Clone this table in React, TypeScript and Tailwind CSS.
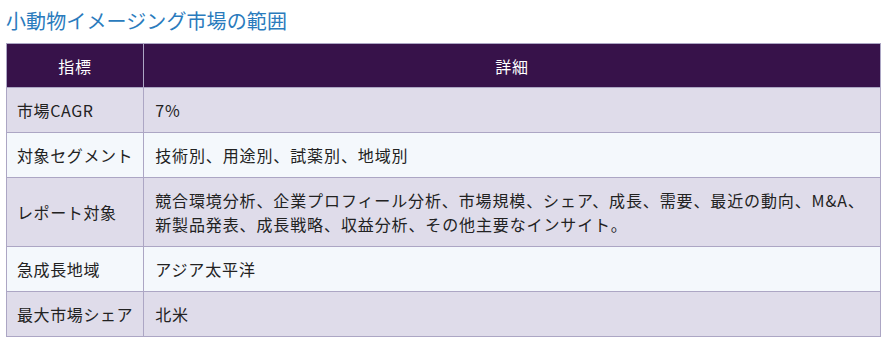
const ROWS: { label: string; detail: string }[] = [
  { label: '市場CAGR', detail: '7%' },
  { label: '対象セグメント', detail: '技術別、用途別、試薬別、地域別' },
  {
    label: 'レポート対象',
    detail:
      '競合環境分析、企業プロフィール分析、市場規模、シェア、成長、需要、最近の動向、M&A、新製品発表、成長戦略、収益分析、その他主要なインサイト。',
  },
  { label: '急成長地域', detail: 'アジア太平洋' },
  { label: '最大市場シェア', detail: '北米' },
];

export default function App() {
  return (
    <div
      className="h-[339px] w-[889px] bg-white pl-[6px] pt-[6px]"
      style={{ fontFamily: '"Noto Sans CJK JP", "Noto Sans", sans-serif' }}
    >
      <h2 className="mb-[8px] h-[29px] text-[20px] leading-[29px] font-normal tracking-[0.1px] text-[#2a7bbd]">
        小動物イメージング市場の範囲
      </h2>
      <table className="w-[875px] border-collapse text-[16px] leading-[24px] tracking-[0.88px] text-[#222]">
        <thead>
          <tr className="bg-[#37124a] text-white">
            <th className="h-[44px] w-[137px] border border-[#aca6c4] px-[10px] text-center font-normal">指標</th>
            <th className="h-[44px] border border-[#aca6c4] px-[10px] text-center font-normal">詳細</th>
          </tr>
        </thead>
        <tbody>
          {ROWS.map((r, i) => (
            <tr key={r.label} className={i % 2 === 0 ? 'bg-[#dfdcea]' : 'bg-[#f4f8fc]'}>
              <td className="border border-[#aca6c4] px-[10px] py-[10px] align-middle whitespace-nowrap tracking-[0.6px]">{r.label}</td>
              <td className="border border-[#aca6c4] py-[10px] pr-[10px] pl-[11px] align-middle">{r.detail}</td>
            </tr>
          ))}
        </tbody>
      </table>
    </div>
  );
}
